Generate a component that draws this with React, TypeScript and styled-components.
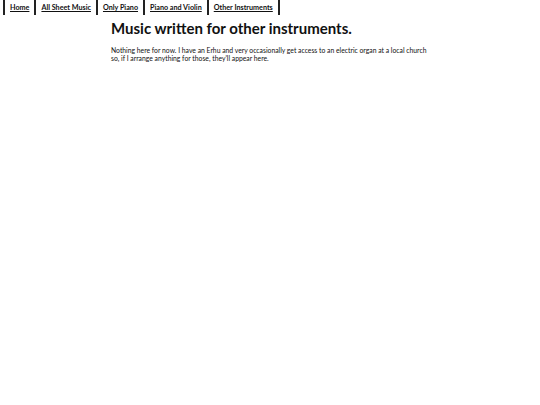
import React from 'react'
import styled, { createGlobalStyle } from 'styled-components'

const GlobalStyle = createGlobalStyle`
  html, body {
    margin: 0;
    padding: 0;
    background: #ffffff;
    color: #111111;
    font-family: Lato, "Open Sans", sans-serif;
  }
`

const Nav = styled.nav`
  display: flex;
  padding: 0 0 0 3px;
`

const NavList = styled.ul`
  display: flex;
  list-style: none;
  margin: 0;
  padding: 0;
  border-right: 2px solid #222222;
`

const NavItem = styled.li`
  border-left: 2px solid #222222;
  height: 15px;
  display: flex;
  align-items: center;
  padding: 0 5px;
`

const NavLink = styled.a`
  font-size: 7.2px;
  font-weight: 700;
  color: #111111;
  text-decoration: underline;
`

const Main = styled.main`
  width: 318px;
  margin: 0 auto;
`

const Title = styled.h1`
  font-size: 15px;
  font-weight: 700;
  margin: 4px 0 9px;
  line-height: 18px;
`

const Body = styled.p`
  font-size: 6.8px;
  line-height: 8px;
  margin: 0;
`

const links = ['Home', 'All Sheet Music', 'Only Piano', 'Piano and Violin', 'Other Instruments']

export default function App() {
  return (
    <>
      <GlobalStyle />
      <Nav>
        <NavList>
          {links.map((l) => (
            <NavItem key={l}>
              <NavLink href="#">{l}</NavLink>
            </NavItem>
          ))}
        </NavList>
      </Nav>
      <Main>
        <Title>Music written for other instruments.</Title>
        <Body>
          Nothing here for now. I have an Erhu and very occasionally get access to an electric organ at a local church
          so, if I arrange anything for those, they'll appear here.
        </Body>
      </Main>
    </>
  )
}
